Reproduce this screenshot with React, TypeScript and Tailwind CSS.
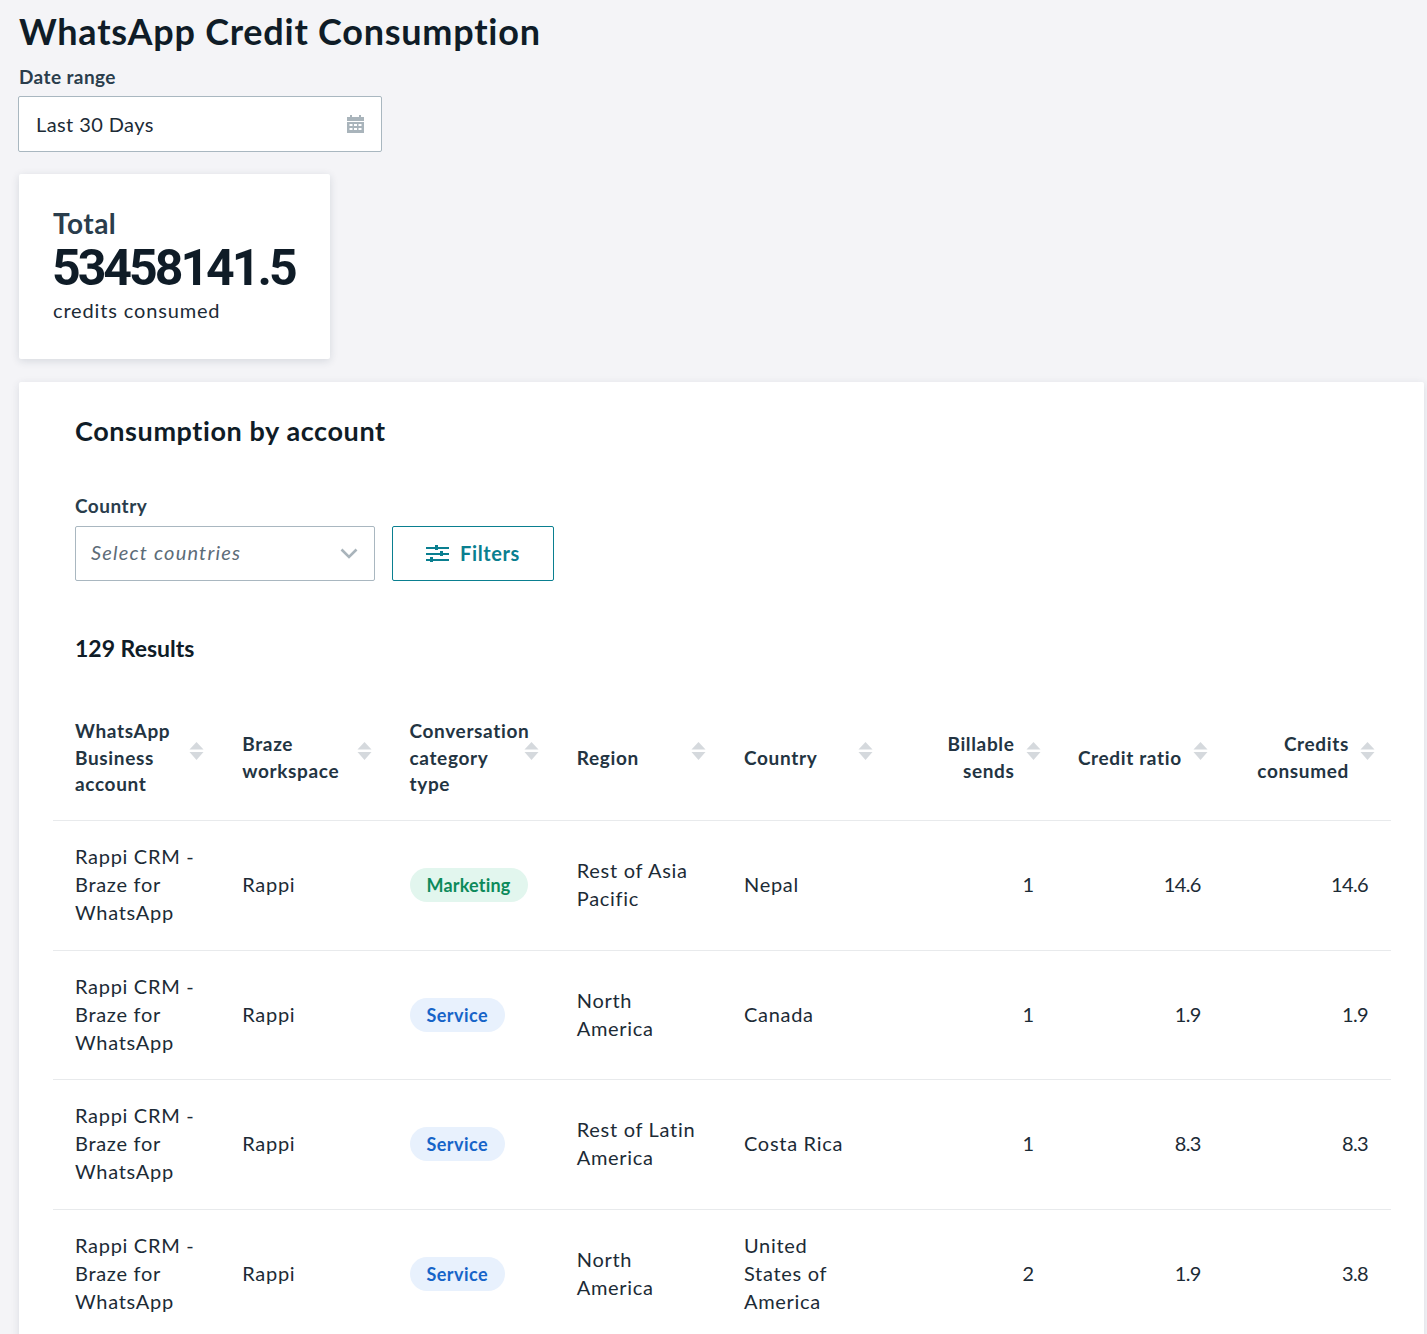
const FONT = "font-['Lato','Noto_Sans',sans-serif]";

const ROWS = [
  { region: ['Rest of Asia', 'Pacific'], country: ['Nepal'], type: 'Marketing', sends: '1', ratio: '14.6', credits: '14.6' },
  { region: ['North', 'America'], country: ['Canada'], type: 'Service', sends: '1', ratio: '1.9', credits: '1.9' },
  { region: ['Rest of Latin', 'America'], country: ['Costa Rica'], type: 'Service', sends: '1', ratio: '8.3', credits: '8.3' },
  { region: ['North', 'America'], country: ['United', 'States of', 'America'], type: 'Service', sends: '2', ratio: '1.9', credits: '3.8' },
];

const HEADERS = [
  { lines: ['WhatsApp', 'Business', 'account'], right: false },
  { lines: ['Braze', 'workspace'], right: false },
  { lines: ['Conversation', 'category', 'type'], right: false },
  { lines: ['Region'], right: false },
  { lines: ['Country'], right: false },
  { lines: ['Billable', 'sends'], right: true },
  { lines: ['Credit ratio'], right: true },
  { lines: ['Credits', 'consumed'], right: true },
];

function SortIcon() {
  return (
    <svg width="15" height="20" viewBox="0 0 15 20" className="mb-[14px] shrink-0" fill="#d5d9dd">
      <path d="M7.5 1 L14.5 8.5 H0.5 Z" />
      <path d="M0.5 11 H14.5 L7.5 19 Z" />
    </svg>
  );
}

function Lines({ lines }: { lines: string[] }) {
  return (
    <>
      {lines.map((l) => (
        <div key={l} className="whitespace-nowrap">{l}</div>
      ))}
    </>
  );
}

function Badge({ type }: { type: string }) {
  const marketing = type === 'Marketing';
  return (
    <span
      className={`inline-flex h-[34px] items-center rounded-full px-[17px] text-[18px] font-bold ${
        marketing ? 'bg-[#e2f6ee] tracking-[0.2px] text-[#0c8a5b]' : 'bg-[#e8f1fd] tracking-[0.45px] text-[#1664c8]'
      }`}
    >
      {type}
    </span>
  );
}

export default function App() {
  return (
    <div className={`${FONT} h-[1334px] overflow-hidden bg-[#f4f4f7] pl-[19px] pr-[3px] text-[#1c2b36]`}>
      <h1 className="pt-[9px] text-[36px] leading-[44px] font-bold tracking-[0.75px] text-[#0f1c27]">WhatsApp Credit Consumption</h1>

      <div className="mt-[11px] text-[19px] leading-[26px] font-bold tracking-[0.4px] text-[#2a3d4c]">Date range</div>
      <div className="mt-[6px] -ml-px flex h-[56px] w-[364px] items-center justify-between rounded-[2px] border border-[#a9b7c0] bg-white pr-[17px] pl-[17px] text-[20px] tracking-[0.4px]">
        <span>Last 30 Days</span>
        <svg width="17" height="18" viewBox="0 0 17 18" fill="#a9b4bb">
          <path d="M3 0h2v2h7V0h2v2h3v4H0V2h3z" />
          <path fillRule="evenodd" d="M0 7h17v11H0zM2.5 9v2h3V9zm4.5 0v2h3V9zm4.5 0v2h3V9zM2.5 13v2h3v-2zm4.5 0v2h3v-2zm4.5 0v2h3v-2z" />
        </svg>
      </div>

      <div className="mt-[22px] h-[185px] w-[311px] rounded-[2px] bg-white pt-[32px] pl-[34px] shadow-[0_2px_8px_rgba(30,50,70,0.14)]">
        <div className="text-[28px] leading-[34px] font-bold tracking-[0.5px] text-[#2a3d4c]">Total</div>
        <div className="mt-[1px] -ml-px font-['Roboto',sans-serif] text-[50px] leading-[54px] font-bold tracking-[-3px] text-[#0f1c27]">53458141.5</div>
        <div className="mt-[2px] text-[20px] leading-[26px] tracking-[0.85px]">credits consumed</div>
      </div>

      <div className="mt-[23px] rounded-t-[2px] bg-white pt-[31px] pr-[33px] pl-[34px] shadow-[0_2px_8px_rgba(30,50,70,0.12)]">
        <h2 className="pl-[22px] text-[27px] leading-[36px] font-bold tracking-[0.6px] text-[#0f1c27]">Consumption by account</h2>

        <div className="mt-[44px] pl-[22px] text-[19px] leading-[26px] font-bold tracking-[0.5px] text-[#2a3d4c]">Country</div>
        <div className="mt-[7px] flex gap-[17px] pl-[22px]">
          <div className="flex h-[55px] w-[300px] items-center justify-between rounded-[2px] border border-[#a9b7c0] pr-[16px] pl-[15px] text-[20px] tracking-[1.2px] text-[#5c6c78] italic">
            <span className="pb-[3px]">Select countries</span>
            <svg width="18" height="11" viewBox="0 0 18 11" fill="none" stroke="#a9b4bb" strokeWidth="2.6">
              <path d="M1.5 1.5 L9 9 L16.5 1.5" />
            </svg>
          </div>
          <div className="flex h-[55px] w-[162px] items-center justify-center gap-[11px] rounded-[2px] border border-[#0a7f90] text-[20px] font-bold tracking-[0.6px] text-[#0a7f90]">
            <svg width="23" height="19" viewBox="0 0 23 19" fill="#0a7f90">
              <rect x="0" y="3" width="23" height="2" />
              <rect x="0" y="9" width="23" height="2" />
              <rect x="0" y="15" width="23" height="2" />
              <rect x="9" y="1" width="3" height="5" />
              <rect x="14" y="7" width="3" height="5" />
              <rect x="4" y="13" width="3" height="5" />
            </svg>
            <span className="pb-[2px]">Filters</span>
          </div>
        </div>

        <div className="mt-[51px] pl-[22px] text-[23px] leading-[32px] font-bold text-[#0f1c27]">129 Results</div>

        <table className="mt-[32px] w-[1338px] table-fixed border-collapse">
          <thead>
            <tr className="h-[124px] border-b border-[#e8eaec]">
              {HEADERS.map((h) => (
                <th key={h.lines[0]} className="p-0 pr-[16px] pl-[22px] font-normal">
                  <div className={`flex items-center ${h.right ? 'justify-end gap-[11px] text-right' : 'gap-[12px] text-left'}`}>
                    <div className={`text-[19px] leading-[26.5px] font-bold tracking-[0.65px] text-[#233442] ${h.right ? '' : 'min-w-0 flex-1'}`}>
                      <Lines lines={h.lines} />
                    </div>
                    <SortIcon />
                  </div>
                </th>
              ))}
            </tr>
          </thead>
          <tbody className="text-[20px] leading-[28px] tracking-[0.7px]">
            {ROWS.map((r, i) => (
              <tr key={i} className={`border-b border-[#e8eaec] ${i % 2 ? 'h-[129px]' : 'h-[130px]'}`}>
                <td className="px-[22px] pb-[2px]"><Lines lines={['Rappi CRM -', 'Braze for', 'WhatsApp']} /></td>
                <td className="px-[22px] pb-[2px]">Rappi</td>
                <td className="px-[22px]"><Badge type={r.type} /></td>
                <td className="px-[22px] pb-[2px]"><Lines lines={r.region} /></td>
                <td className="px-[22px] pb-[2px]"><Lines lines={r.country} /></td>
                <td className="pr-[23px] pb-[2px] pl-[22px] text-right tracking-[-0.6px]">{r.sends}</td>
                <td className="pr-[23px] pb-[2px] pl-[22px] text-right tracking-[-0.6px]">{r.ratio}</td>
                <td className="pr-[23px] pb-[2px] pl-[22px] text-right tracking-[-0.6px]">{r.credits}</td>
              </tr>
            ))}
          </tbody>
        </table>
      </div>
    </div>
  );
}
